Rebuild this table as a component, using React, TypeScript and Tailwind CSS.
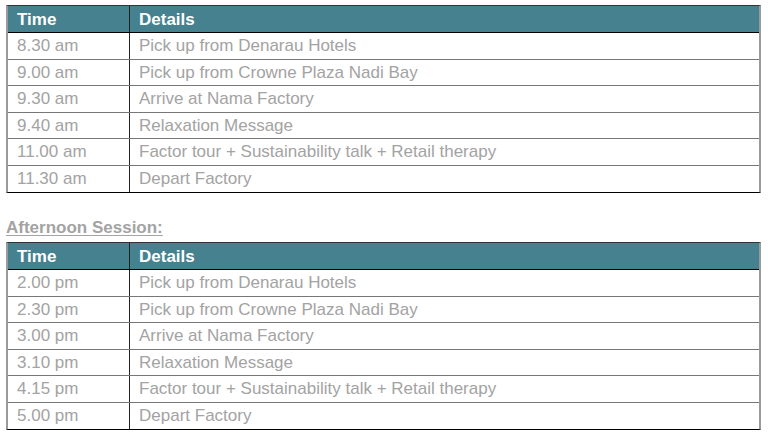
const morning = [
  ['8.30 am', 'Pick up from Denarau Hotels'],
  ['9.00 am', 'Pick up from Crowne Plaza Nadi Bay'],
  ['9.30 am', 'Arrive at Nama Factory'],
  ['9.40 am', 'Relaxation Message'],
  ['11.00 am', 'Factor tour + Sustainability talk + Retail therapy'],
  ['11.30 am', 'Depart Factory'],
]

const afternoon = [
  ['2.00 pm', 'Pick up from Denarau Hotels'],
  ['2.30 pm', 'Pick up from Crowne Plaza Nadi Bay'],
  ['3.00 pm', 'Arrive at Nama Factory'],
  ['3.10 pm', 'Relaxation Message'],
  ['4.15 pm', 'Factor tour + Sustainability talk + Retail therapy'],
  ['5.00 pm', 'Depart Factory'],
]

function Schedule({ rows }: { rows: string[][] }) {
  return (
    <div className="w-[755px] border-t border-t-[#333] border-b border-b-black border-l-2 border-l-[#9a9a9a] border-r-2 border-r-[#9a9a9a]">
      <div className="flex h-[27px] bg-[#45818e] border-b border-b-black text-white font-bold">
        <div className="w-[122px] pl-[9px] flex items-center border-r border-r-[#222]">Time</div>
        <div className="flex-1 pl-[9px] flex items-center">Details</div>
      </div>
      {rows.map(([time, details], i) => (
        <div
          key={time}
          className={
            'flex h-[26.5px] text-[#a3a3a3] ' +
            (i < rows.length - 1 ? 'border-b border-b-[#777]' : '')
          }
        >
          <div className="w-[122px] pl-[9px] flex items-center border-r border-r-[#222]">{time}</div>
          <div className="flex-1 pl-[9px] flex items-center">{details}</div>
        </div>
      ))}
    </div>
  )
}

export default function App() {
  return (
    <div className="w-[768px] h-[434px] bg-white pl-[6px] pt-[5px] text-[17px] leading-none font-['Liberation_Sans',Arial,sans-serif] overflow-hidden">
      <Schedule rows={morning} />
      <div className="mt-[26px] mb-[6px] font-bold text-[#a3a3a3] underline underline-offset-2">Afternoon Session:</div>
      <Schedule rows={afternoon} />
    </div>
  )
}
